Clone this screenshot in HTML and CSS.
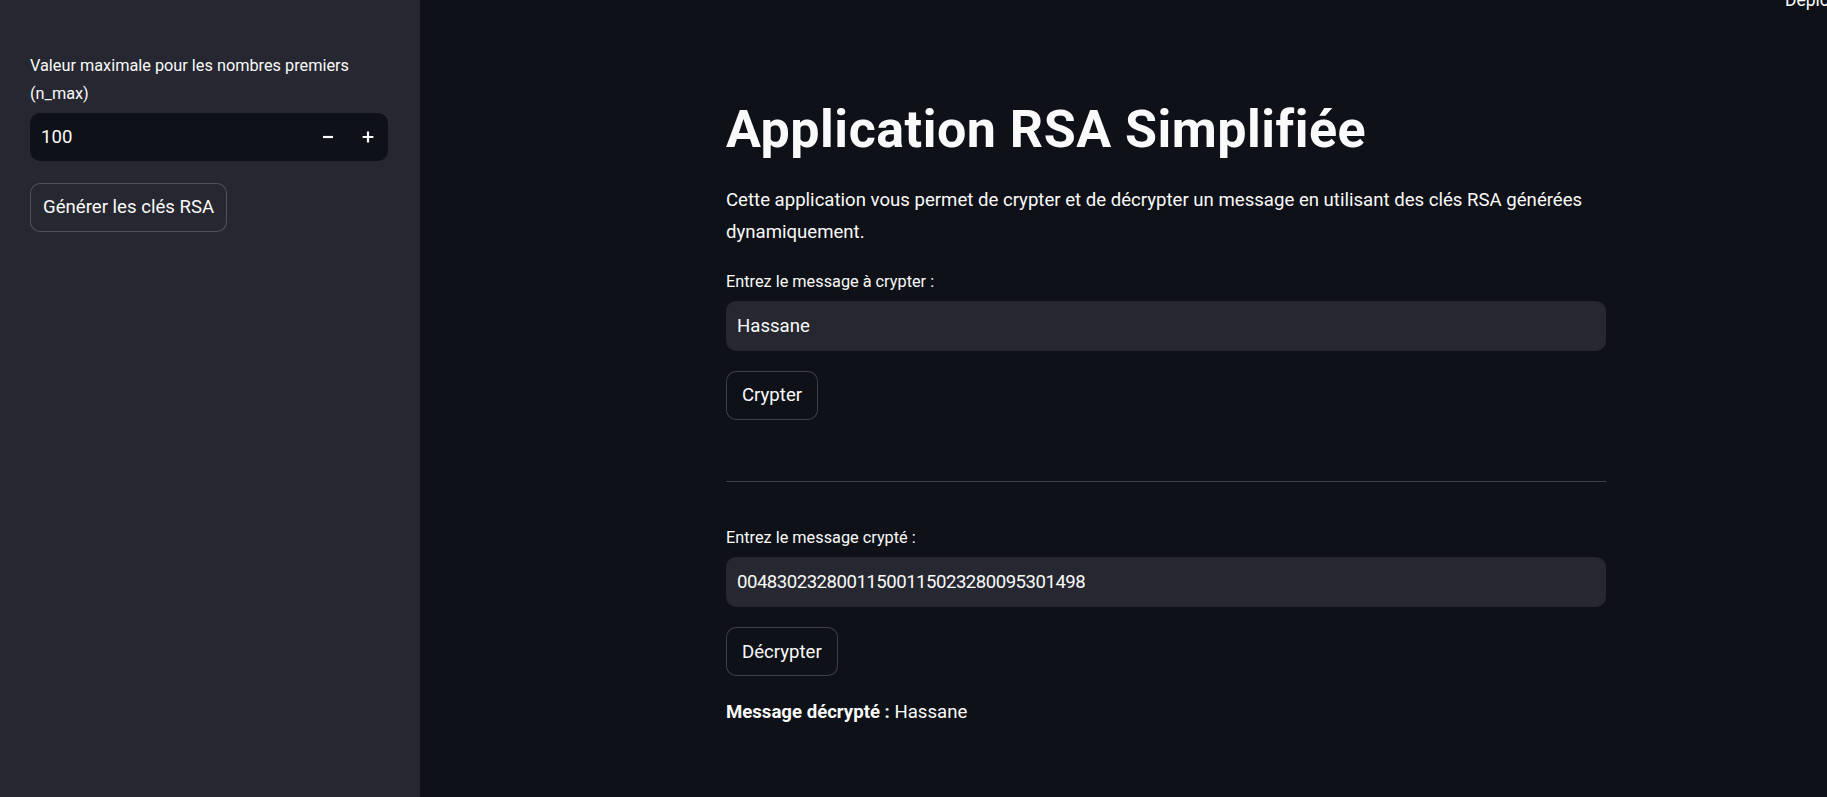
FILE: index.html
```html
<!DOCTYPE html>
<html lang="fr">
<head>
<meta charset="utf-8">
<title>Application RSA Simplifiée</title>
<link rel="stylesheet" href="styles.css">
</head>
<body>
<div class="app">
  <aside class="sidebar">
    <div class="field">
      <label class="label">Valeur maximale pour les nombres premiers (n_max)</label>
      <div class="number-input">
        <span class="number-value">100</span>
        <div class="steps">
          <button class="step" aria-label="moins">
            <svg width="12" height="12" viewBox="0 0 12 12"><path d="M1 6h10" stroke="#fafafa" stroke-width="2.2" stroke-linecap="butt"/></svg>
          </button>
          <button class="step" aria-label="plus">
            <svg width="12" height="12" viewBox="0 0 12 12"><path d="M0.6 6h10.8M6 0.6v10.8" stroke="#fafafa" stroke-width="2.2" stroke-linecap="butt"/></svg>
          </button>
        </div>
      </div>
    </div>
    <button class="btn btn-side">Générer les clés RSA</button>
  </aside>
  <main class="main">
    <div class="content">
      <h1 class="title">Application RSA Simplifiée</h1>
      <p class="text">Cette application vous permet de crypter et de décrypter un message en utilisant des clés RSA générées dynamiquement.</p>
      <div class="field">
        <label class="label">Entrez le message à crypter :</label>
        <div class="text-input">Hassane</div>
      </div>
      <div><button class="btn">Crypter</button></div>
      <hr class="divider">
      <div class="field">
        <label class="label">Entrez le message crypté :</label>
        <div class="text-input digits">00483023280011500115023280095301498</div>
      </div>
      <div><button class="btn">Décrypter</button></div>
      <p class="text result"><strong>Message décrypté :</strong> Hassane</p>
    </div>
    <span class="deploy">Deploy</span>
  </main>
</div>
</body>
</html>
```
FILE: styles.css
```css
* { box-sizing: border-box; }
html, body { margin: 0; padding: 0; height: 100%; }
body {
  background: #0e1117;
  color: #fafafa;
  font-family: Roboto, "Noto Sans", sans-serif;
  overflow: hidden;
}
.app {
  display: flex;
  height: 797px;
}
.sidebar {
  width: 420px;
  flex: none;
  background: #262730;
  padding: 52px 32px 0 30px;
  display: flex;
  flex-direction: column;
  align-items: flex-start;
  gap: 21.5px;
}
.sidebar .field { width: 100%; }
.field {
  display: flex;
  flex-direction: column;
}
.label {
  font-size: 16.3px;
  line-height: 28px;
  margin-bottom: 5px;
  color: #fafafa;
}
.sidebar .label { padding-right: 4px; }
.number-input {
  height: 48px;
  background: #0e1117;
  border-radius: 10px;
  display: flex;
  align-items: center;
  justify-content: space-between;
  padding-left: 11px;
}
.number-value { font-size: 18.6px; }
.steps { display: flex; height: 100%; }
.step {
  width: 40px;
  height: 100%;
  background: transparent;
  border: 0;
  padding: 0;
  display: flex;
  align-items: center;
  justify-content: center;
}
.btn {
  font-family: Roboto, "Noto Sans", sans-serif;
  font-size: 18.6px;
  color: #fafafa;
  background: #0e1117;
  border: 1px solid rgba(250, 250, 250, 0.2);
  border-radius: 10px;
  height: 49.5px;
  padding: 0 15px;
  display: inline-flex;
  align-items: center;
}
.btn-side {
  background: #262730;
  height: 49px;
  padding: 0 12px;
}
.main {
  flex: 1;
  position: relative;
  padding: 99px 0 0 306px;
}
.content {
  width: 880px;
  display: flex;
  flex-direction: column;
  gap: 20px;
}
.title {
  margin: 0 0 2.6px;
  font-size: 52px;
  line-height: 62px;
  font-weight: 700;
  letter-spacing: 0.5px;
}
.text {
  margin: 0;
  font-size: 18.6px;
  line-height: 32px;
}
.text strong { font-weight: 700; }
.text-input {
  height: 50px;
  background: #262730;
  border-radius: 10px;
  display: flex;
  align-items: center;
  padding-left: 11px;
  font-size: 18.6px;
}
.digits { letter-spacing: -0.5px; }
.divider {
  margin: 41px 0 21.7px;
  border: 0;
  height: 1px;
  background: rgba(250, 250, 250, 0.2);
}
.deploy {
  position: absolute;
  top: -10px;
  left: 1365px;
  font-size: 17.5px;
  line-height: 20px;
  color: #fafafa;
  white-space: nowrap;
}
```
